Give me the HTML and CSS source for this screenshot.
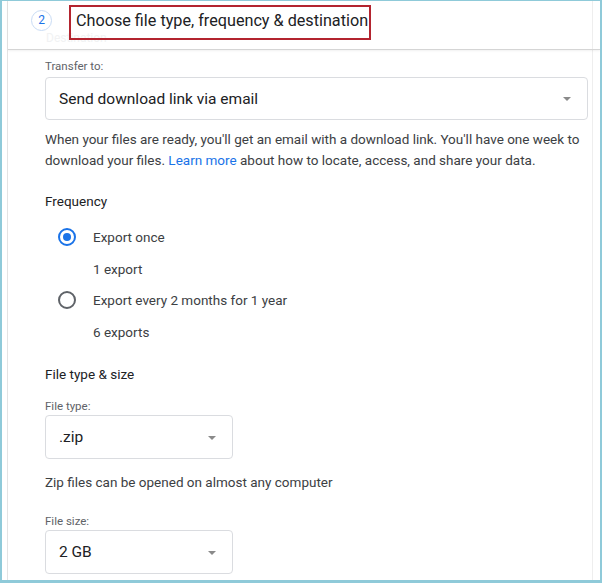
FILE: index.html
```html
<!DOCTYPE html>
<html>
<head>
<meta charset="utf-8">
<link rel="stylesheet" href="styles.css">
</head>
<body>
<div class="frame">
  <div class="card">
    <div class="header">
      <div class="ghost">Destination</div>
      <div class="step">2</div>
      <div class="title">Choose file type, frequency &amp; destination</div>
    </div>
    <div class="content">
      <div class="label">Transfer to:</div>
      <div class="select wide"><span>Send download link via email</span><span class="arrow"></span></div>
      <p class="desc">When your files are ready, you'll get an email with a download link. You'll have one week to download your files. <a class="link">Learn more</a> about how to locate, access, and share your data.</p>

      <div class="section">Frequency</div>
      <div class="radio-row first"><span class="radio checked"></span><span>Export once</span></div>
      <div class="sub">1 export</div>
      <div class="radio-row"><span class="radio"></span><span>Export every 2 months for 1 year</span></div>
      <div class="sub">6 exports</div>

      <div class="section sec2">File type &amp; size</div>
      <div class="label lab1">File type:</div>
      <div class="select narrow"><span>.zip</span><span class="arrow"></span></div>
      <div class="note">Zip files can be opened on almost any computer</div>
      <div class="label lab2">File size:</div>
      <div class="select narrow"><span>2 GB</span><span class="arrow"></span></div>
    </div>
  </div>
</div>
</body>
</html>
```
FILE: styles.css
```css
* { box-sizing: border-box; }
html, body { margin: 0; padding: 0; background: #fff; }
body { font-family: Roboto, "Noto Sans", Arial, sans-serif; color: #202124; }

.frame {
  width: 602px;
  height: 583px;
  border-style: solid;
  border-color: #8fcad9;
  border-width: 1px 2px 3px 2px;
  overflow: hidden;
}
.card {
  margin: 0 7px 0 5px;
  height: 100%;
  border-left: 1px solid #e3e3e3;
  border-right: 1px solid #eeeeee;
}
.header {
  position: relative;
  height: 49px;
  border-bottom: 1px solid #d5d5d5;
  box-shadow: 0 1px 2px rgba(0,0,0,0.06);
  display: flex;
  align-items: flex-start;
  padding: 9px 0 0 23px;
  margin-right: -8px;
}
.step {
  position: relative;
  z-index: 1;
  width: 21px;
  height: 21px;
  border-radius: 50%;
  border: 1px solid #c9dcf5;
  background: #fff;
  color: #1a73e8;
  font-size: 12px;
  line-height: 19px;
  text-align: center;
}
.title {
  position: relative;
  z-index: 1;
  margin: -5px 0 0 17px;
  width: 302px;
  height: 35px;
  border: 2px solid #b3242f;
  padding: 4px 0 0 5px;
  font-size: 16.2px;
  white-space: nowrap;
  color: #202124;
}
.ghost {
  position: absolute;
  left: 38px;
  top: 31px;
  font-size: 12px;
  line-height: 12px;
  color: #f1f2f3;
}
.content {
  padding: 10px 0 0 37px;
}
.label {
  font-size: 11.5px;
  color: #5f6368;
  line-height: 13px;
}
.select {
  display: flex;
  align-items: center;
  justify-content: space-between;
  border: 1px solid #dadce0;
  border-radius: 4px;
  font-size: 15.5px;
  color: #202124;
  padding: 0 16px 0 13px;
}
.select.wide { width: 543px; height: 43px; margin-top: 4px; }
.select.narrow { width: 188px; height: 44px; margin-top: 2px; }
.arrow {
  width: 0; height: 0;
  border-left: 4px solid transparent;
  border-right: 4px solid transparent;
  border-top: 4px solid #8a8a8a;
  margin-top: 1px;
}
.desc {
  margin: 9px 0 0 0;
  width: 545px;
  font-size: 13.5px;
  line-height: 21px;
  color: #3c4043;
}
.link { color: #1a73e8; text-decoration: none; }
.section {
  margin-top: 22px;
  font-size: 13.5px;
  font-weight: 400;
  color: #202124;
  line-height: 16px;
}
.sec2 { margin-top: 26px; }
.radio-row {
  display: flex;
  align-items: center;
  margin-top: 13px;
  margin-left: 13px;
  height: 20px;
  font-size: 13.5px;
  color: #3c4043;
}
.radio-row.first { margin-top: 18px; }
.radio {
  width: 18px; height: 18px;
  border-radius: 50%;
  border: 2px solid #5f6368;
  margin-right: 17px;
  position: relative;
}
.radio.checked { border-color: #1a73e8; }
.radio.checked::after {
  content: "";
  position: absolute;
  left: 3px; top: 3px;
  width: 8px; height: 8px;
  border-radius: 50%;
  background: #1a73e8;
}
.sub {
  margin: 14px 0 0 48px;
  font-size: 13.5px;
  color: #3c4043;
  line-height: 16px;
}
.note {
  margin-top: 15px;
  font-size: 13.5px;
  color: #3c4043;
  line-height: 16px;
}
.lab1 { margin-top: 18px; }
.lab2 { margin-top: 25px; }
```
